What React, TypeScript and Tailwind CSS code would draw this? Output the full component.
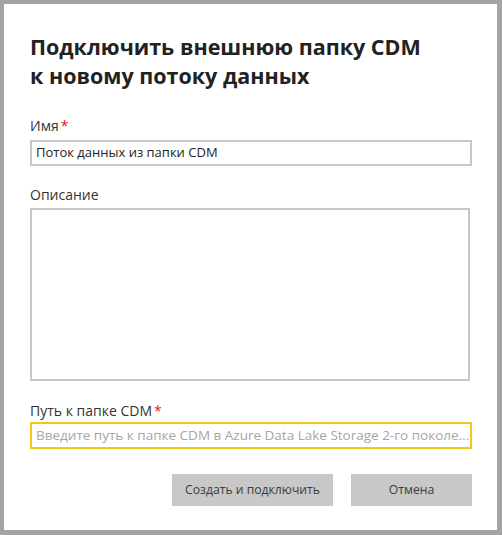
import React from "react";

export default function App() {
  const font = { fontFamily: '"Open Sans", "Noto Sans", sans-serif' };
  return (
    <div className="w-[502px] h-[535px] bg-[#a4a4a4] pt-[4px] pl-[4px] pr-[5px] pb-[5px]" style={font}>
      <div className="h-full w-full bg-white pt-[28px] pl-[26px] pr-[25px] flex flex-col">
        <h1 className="text-[21.5px] leading-[29px] font-bold text-[#222] whitespace-nowrap">
          Подключить внешнюю папку CDM
          <br />к новому потоку данных
        </h1>

        <label className="mt-[26px] text-[14px] leading-[20px] text-[#333]">
          Имя<span className="text-[#e81123] ml-[2px]">*</span>
        </label>
        <div className="mt-[4px] h-[26px] border-2 border-[#c8c8c8] flex items-center pl-[4px] text-[13px] text-[#252423]">
          Поток данных из папки CDM
        </div>

        <label className="mt-[19px] text-[14px] leading-[20px] text-[#333]">Описание</label>
        <div className="mt-[3px] h-[173px] mr-[2px] border-2 border-[#c8c8c8]" />

        <label className="mt-[20px] text-[14px] leading-[20px] text-[#333]">
          Путь к папке CDM<span className="text-[#e81123] ml-[2px]">*</span>
        </label>
        <div className="mt-[1px] h-[27px] border-2 border-[#f2c811] flex items-center pl-[4px] text-[13.5px] text-[#a6a6a6] whitespace-nowrap overflow-hidden">
          Введите путь к папке CDM в Azure Data Lake Storage 2-го поколе...
        </div>

        <div className="mt-[25px] flex justify-end gap-[18px]">
          <button className="w-[161px] h-[32px] bg-[#c8c8c8] text-[12.2px] text-[#3b3b3b]">
            Создать и подключить
          </button>
          <button className="w-[121px] h-[32px] bg-[#c8c8c8] text-[12.2px] text-[#3b3b3b]">
            Отмена
          </button>
        </div>
      </div>
    </div>
  );
}
